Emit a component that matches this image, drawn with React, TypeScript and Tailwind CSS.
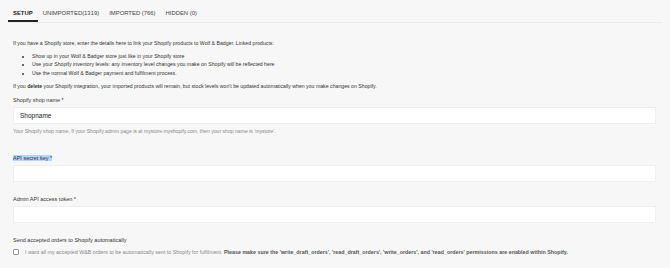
export default function App() {
  const tabs = ['SETUP', 'UNIMPORTED(1319)', 'IMPORTED (766)', 'HIDDEN (0)']

  return (
    <div className="w-[670px] h-[268px] bg-[#f7f7f7] text-[#333] overflow-hidden" style={{ fontFamily: '"Liberation Sans", Arial, sans-serif' }}>
      {/* Tabs */}
      <div className="pl-[8px] pr-[8px]">
        <div className="flex h-[22px]">
          {tabs.map((t, i) => (
            <div
              key={t}
              className={`px-[5px] pt-[10px] pb-[4px] text-[5.9px] leading-[6px] border-b-2 ${i === 0 ? 'border-[#222] text-[#222] font-semibold' : 'border-transparent text-[#444]'}`}
            >
              {t}
            </div>
          ))}
        </div>
        <div className="h-px bg-[#ececec]" />
      </div>

      <div className="pl-[13px] pr-[14px] text-[5.2px]">
        <p className="mt-[16px] leading-[8px]">
          If you have a Shopify store, enter the details here to link your Shopify products to Wolf &amp; Badger. Linked products:
        </p>
        <ul className="mt-[4.75px] pl-[19px] list-disc leading-[8.5px]">
          <li>Show up in your Wolf &amp; Badger store just like in your Shopify store</li>
          <li>Use your Shopify inventory levels: any inventory level changes you make on Shopify will be reflected here</li>
          <li>Use the normal Wolf &amp; Badger payment and fulfilment process.</li>
        </ul>
        <p className="mt-[4.75px] leading-[8px]">
          If you <strong className="font-bold">delete</strong> your Shopify integration, your imported products will remain, but stock levels won't be updated automatically when you make changes on Shopify.
        </p>

        <div className="mt-[6px] leading-[8px] text-[5.5px]">Shopify shop name *</div>
        <div className="mt-[3px] h-[17px] bg-white border border-[#efefef] flex items-center px-[6px] text-[6.5px] text-[#222]">
          Shopname
        </div>
        <div className="mt-[3px] leading-[8px] text-[5.1px] text-[#888]">
          Your Shopify shop name. If your Shopify admin page is at mystore.myshopify.com, then your shop name is 'mystore'.
        </div>

        <div className="mt-[19px] leading-[8px] text-[5.5px]">
          <span className="bg-[#b4d5fe]">API secret key *</span>
        </div>
        <div className="mt-[3px] h-[17px] bg-white border border-[#efefef]" />

        <div className="mt-[13px] leading-[8px] text-[5.5px]">Admin API access token *</div>
        <div className="mt-[3px] h-[17px] bg-white border border-[#efefef]" />

        <div className="mt-[13px] leading-[8px] text-[5.5px]">Send accepted orders to Shopify automatically</div>
        <div className="mt-[4px] h-[8px] flex items-center">
          <span className="w-[6px] h-[6px] border border-[#999] rounded-[1px] bg-white shrink-0" />
          <span className="ml-[6px] text-[5.33px] leading-[8px] text-[#888]">
            I want all my accepted W&amp;B orders to be automatically sent to Shopify for fulfilment.{' '}
            <strong className="font-bold text-[#555]">
              Please make sure the 'write_draft_orders', 'read_draft_orders', 'write_orders', and 'read_orders' permissions are enabled within Shopify.
            </strong>
          </span>
        </div>
      </div>
    </div>
  )
}
